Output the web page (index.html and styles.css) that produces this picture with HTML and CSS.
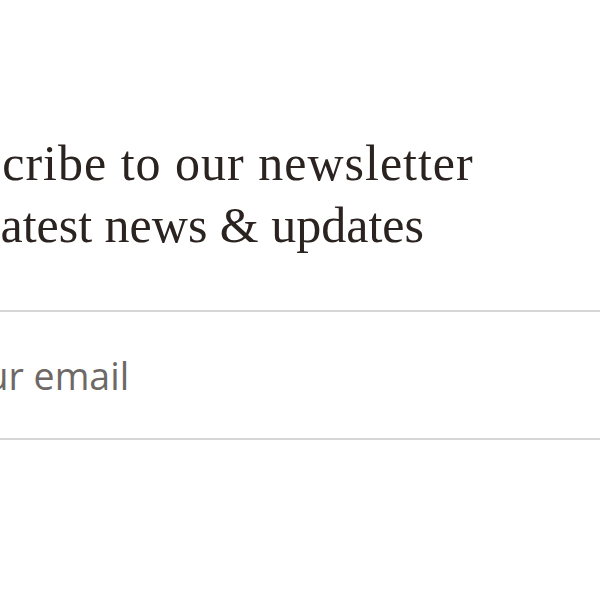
FILE: index.html
```html
<!DOCTYPE html>
<html lang="en">
<head>
<meta charset="utf-8">
<title>Newsletter</title>
<link rel="stylesheet" href="styles.css">
</head>
<body>
  <section class="newsletter">
    <h2 class="newsletter-title">
      <span class="title-line">Subscribe to our newsletter</span>
      <span class="title-line title-line--sub">the latest news &amp; updates</span>
    </h2>
    <form class="newsletter-form">
      <input class="newsletter-input" type="email" placeholder="Your email">
    </form>
  </section>
</body>
</html>
```

FILE: styles.css
```css
html, body {
  margin: 0;
  padding: 0;
  background: #ffffff;
  overflow: hidden;
}

.newsletter {
  margin-left: -99px;
  padding-top: 132px;
  width: 900px;
}

.newsletter-title {
  margin: 0;
  font-family: "Liberation Serif", serif;
  font-weight: 400;
  font-size: 50px;
  line-height: 62px;
  color: #2a2320;
}

.title-line {
  display: block;
  letter-spacing: 1px;
}

.title-line--sub {
  margin-left: 12px;
  letter-spacing: 0;
}

.newsletter-form {
  margin-top: 54px;
}

.newsletter-input {
  display: block;
  box-sizing: border-box;
  width: 100%;
  height: 130px;
  margin: 0;
  padding: 0 0 0 41px;
  border: 0;
  border-top: 2px solid #d6d6d6;
  border-bottom: 2px solid #d6d6d6;
  background: #ffffff;
  font-family: "Open Sans", sans-serif;
  font-size: 37.5px;
  color: #2a2320;
  outline: none;
}

.newsletter-input::placeholder {
  color: #6e6866;
}
```
